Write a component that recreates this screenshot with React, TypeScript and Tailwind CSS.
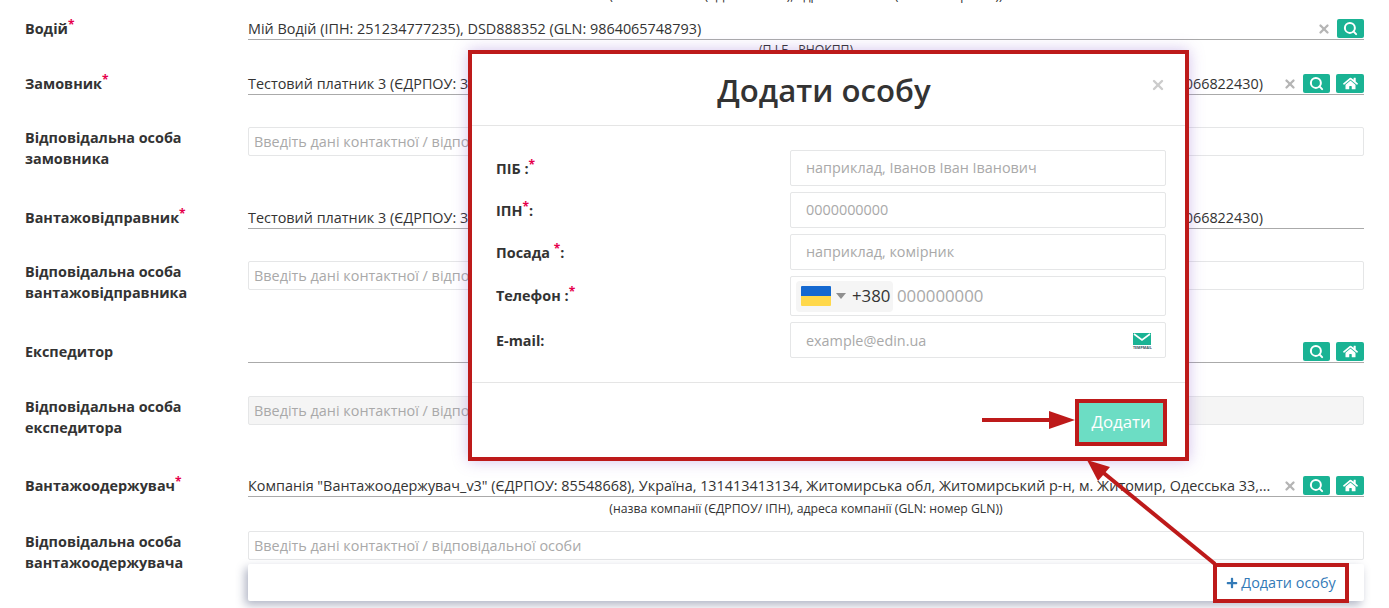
import React from 'react';
import { Search, X } from 'lucide-react';
import { FaHome, FaPlus } from 'react-icons/fa';

const PLACEHOLDER = 'Введіть дані контактної / відповідальної особи';
const HINT = '(назва компанії (ЄДРПОУ/ ІПН), адреса компанії (GLN: номер GLN))';

const Req: React.FC = () => <sup className="text-[#e6004c] text-[12px] font-bold top-[-5px]">*</sup>;

const Hint: React.FC<{ className?: string; children: React.ReactNode }> = ({ className, children }) => (
    <div className={`pl-[248px] w-[1364px] text-center text-[12.24px] leading-[14px] h-[14px] text-[#333] ${className ?? ''}`}>
        {children}
    </div>
);

const SearchBtn: React.FC = () => (
    <button className="w-[27px] h-[19px] rounded-[2px] bg-[#1ab394] text-white flex items-center justify-center">
        <Search size={15} strokeWidth={3.2} />
    </button>
);

const HomeBtn: React.FC = () => (
    <button className="w-[28px] h-[19px] rounded-[2px] bg-[#1ab394] text-white flex items-center justify-center">
        <FaHome size={15} />
    </button>
);

const Clear: React.FC = () => <X size={14} strokeWidth={4} className="text-[#b5b5b5]" />;

const Label: React.FC<{ children: React.ReactNode }> = ({ children }) => (
    <label className="w-[223px] shrink-0 font-bold text-[14.4px] leading-[21px] text-[#333]">{children}</label>
);

const SelectRow: React.FC<{
    className?: string;
    label: React.ReactNode;
    children?: React.ReactNode;
    actions?: React.ReactNode;
}> = ({ className, label, children, actions }) => (
    <div className={`flex pl-[25px] ${className ?? ''}`}>
        <Label>{label}</Label>
        <div className="w-[1116px] h-[22px] border-b border-[#aaa] flex items-center text-[14.4px] text-[#333]">
            <div className="flex-1 min-w-0">{children}</div>
            {actions}
        </div>
    </div>
);

const ContactRow: React.FC<{ className?: string; label: React.ReactNode; disabled?: boolean }> = ({
    className,
    label,
    disabled,
}) => (
    <div className={`flex pl-[25px] ${className ?? ''}`}>
        <Label>{label}</Label>
        <input
            readOnly
            placeholder={PLACEHOLDER}
            className={`w-[1116px] h-[29px] px-[5px] text-[14.4px] border border-[#e5e6e7] rounded-[2px] placeholder:text-[#a9a9a9] ${disabled ? 'bg-[#f5f5f5]' : 'bg-white'}`}
        />
    </div>
);

const ModalLabel: React.FC<{ className?: string; children: React.ReactNode }> = ({ className, children }) => (
    <label className={`w-[294px] shrink-0 font-bold text-[14.4px] text-[#333] ${className ?? 'pt-[2px]'}`}>{children}</label>
);

const ModalInput: React.FC<{ placeholder: string; className?: string }> = ({ placeholder, className }) => (
    <input
        readOnly
        placeholder={placeholder}
        className={`w-[376px] h-[36px] px-[15px] text-[14.4px] border border-[#e5e6e7] rounded-[2px] placeholder:text-[#a9a9a9] ${className ?? 'pb-[1px]'}`}
    />
);

const TempMailIcon: React.FC = () => (
    <svg width="20" height="18" viewBox="0 0 20 18" className="absolute right-[14px] top-[10px]">
        <rect x="1" y="1" width="18" height="12" fill="#1ab394" />
        <path d="M2 2 L10 8 L18 2" fill="none" stroke="#fff" strokeWidth="1.6" />
        <text x="1" y="16.5" fontSize="3.6" fontWeight="700" fill="#35505a">
            TEMPMAIL
        </text>
    </svg>
);

const Modal: React.FC = () => (
    <div className="absolute left-[468px] top-[50px] w-[721px] h-[411px] bg-white border-4 border-[#bd1a1a] shadow-[0_0_14px_rgba(130,80,200,0.35)]">
        <div className="relative h-[72px] border-b border-[#e5e5e5] flex items-center justify-center">
            <h2 className="text-[31.2px] font-semibold text-[#333] pt-[1px] pr-[9px]">Додати особу</h2>
            <X size={16} strokeWidth={3.6} className="absolute right-[19px] top-[23px] text-[#ccc]" />
        </div>
        <div className="h-[257px] border-b border-[#e5e5e5] pt-[24px] pl-[24px] flex flex-col gap-[6px]">
            <div className="flex items-center">
                <ModalLabel>
                    ПІБ :<Req />
                </ModalLabel>
                <ModalInput placeholder="наприклад, Іванов Іван Іванович" />
            </div>
            <div className="flex items-center">
                <ModalLabel>
                    ІПН<Req />:
                </ModalLabel>
                <ModalInput placeholder="0000000000" />
            </div>
            <div className="flex items-center">
                <ModalLabel>
                    Посада <Req />:
                </ModalLabel>
                <ModalInput placeholder="наприклад, комірник" />
            </div>
            <div className="flex items-center">
                <ModalLabel className="pt-0">
                    Телефон :<Req />
                </ModalLabel>
                <div className="w-[376px] h-[40px] border border-[#e5e6e7] rounded-[2px] flex items-center pl-[5px]">
                    <div className="w-[97px] h-[31px] bg-[#f5f5f5] rounded-[4px] flex items-center pl-[5px]">
                        <div className="w-[30px] h-[20px] rounded-[1px] overflow-hidden flex flex-col">
                            <div className="h-1/2 bg-[#1468d0]" />
                            <div className="h-1/2 bg-[#ffd84a]" />
                        </div>
                        <svg width="10" height="6" viewBox="0 0 10 6" className="ml-[5px]">
                            <path d="M0 0 H10 L5 6 Z" fill="#8f8f8f" />
                        </svg>
                        <span className="ml-[6px] text-[16.8px] text-[#333]">+380</span>
                    </div>
                    <input
                        readOnly
                        placeholder="000000000"
                        className="ml-[4px] w-[200px] text-[16.8px] placeholder:text-[#a9a9a9]"
                    />
                </div>
            </div>
            <div className="flex items-center">
                <ModalLabel>E-mail:</ModalLabel>
                <div className="relative">
                    <ModalInput placeholder="example@edin.ua" className="pt-[1px]" />
                    <TempMailIcon />
                </div>
            </div>
        </div>
        <div className="flex justify-end pt-[16px] pr-[18px]">
            <button className="w-[92px] h-[47px] border-4 border-[#bd1a1a] bg-[#6cddc4] text-white text-[16.8px] pb-[2px]">
                Додати
            </button>
        </div>
    </div>
);

const AddPersonPanel: React.FC = () => (
    <div className="absolute left-[248px] top-[564px] w-[1116px] h-[37px] bg-white rounded-[2px] shadow-[-3px_4px_10px_rgba(60,70,110,0.4)] flex justify-end items-center pr-[15px]">
        <a className="h-[40px] w-[136px] border-4 border-[#bd1a1a] flex items-center justify-center gap-[3px] text-[14.4px] text-[#337ab7] bg-white">
            <FaPlus size={12} />
            Додати особу
        </a>
    </div>
);

const Arrows: React.FC = () => (
    <svg width="1389" height="608" className="absolute left-0 top-0 pointer-events-none">
        <path d="M982 420 H1052" stroke="#bd1a1a" strokeWidth="4" />
        <path d="M1049 411 L1075 420 L1049 429 Z" fill="#bd1a1a" />
        <path d="M1215 564 L1100 470" stroke="#bd1a1a" strokeWidth="4" />
        <path d="M1087 460 L1110 467 L1098 481 Z" fill="#bd1a1a" />
    </svg>
);

export default function App() {
    return (
        <div className="relative w-[1389px] h-[608px] overflow-hidden bg-white font-['Open_Sans',sans-serif]">
            <Hint className="mt-[-11px]">{HINT}</Hint>
            <SelectRow
                className="mt-[15px]"
                label={
                    <>
                        Водій
                        <Req />
                    </>
                }
                actions={
                    <div className="flex items-center gap-[6px]">
                        <Clear />
                        <SearchBtn />
                    </div>
                }
            >
                Мій Водій (ІПН: 251234777235), DSD888352 (GLN: 9864065748793)
            </SelectRow>
            <Hint className="mt-[3px]">(П.І.Б., РНОКПП)</Hint>
            <SelectRow
                className="mt-[16px]"
                label={
                    <>
                        Замовник
                        <Req />
                    </>
                }
                actions={
                    <div className="flex items-center gap-[6px]">
                        <Clear />
                        <SearchBtn />
                        <HomeBtn />
                    </div>
                }
            >
                <div className="w-[1015px] flex justify-between">
                    <span>Тестовий платник 3 (ЄДРПОУ: 3</span>
                    <span>9864066822430)</span>
                </div>
            </SelectRow>
            <ContactRow className="mt-[32px]" label="Відповідальна особа замовника" />
            <SelectRow
                className="mt-[38px]"
                label={
                    <>
                        Вантажовідправник
                        <Req />
                    </>
                }
            >
                <div className="w-[1015px] flex justify-between">
                    <span>Тестовий платник 3 (ЄДРПОУ: 3</span>
                    <span>9864066822430)</span>
                </div>
            </SelectRow>
            <ContactRow className="mt-[32px]" label="Відповідальна особа вантажовідправника" />
            <SelectRow
                className="mt-[38px]"
                label="Експедитор"
                actions={
                    <div className="flex items-center gap-[6px]">
                        <SearchBtn />
                        <HomeBtn />
                    </div>
                }
            />
            <ContactRow className="mt-[33px]" label="Відповідальна особа експедитора" disabled />
            <SelectRow
                className="mt-[37px]"
                label={
                    <>
                        Вантажоодержувач
                        <Req />
                    </>
                }
                actions={
                    <div className="flex items-center gap-[6px]">
                        <Clear />
                        <SearchBtn />
                        <HomeBtn />
                    </div>
                }
            >
                Компанія "Вантажоодержувач_v3" (ЄДРПОУ: 85548668), Україна, 131413413134, Житомирська обл, Житомирський р-н, м. Житомир, Одесська 33,...
            </SelectRow>
            <Hint className="mt-[5px]">{HINT}</Hint>
            <ContactRow className="mt-[14.5px]" label="Відповідальна особа вантажоодержувача" />
            <AddPersonPanel />
            <Modal />
            <Arrows />
        </div>
    );
}
